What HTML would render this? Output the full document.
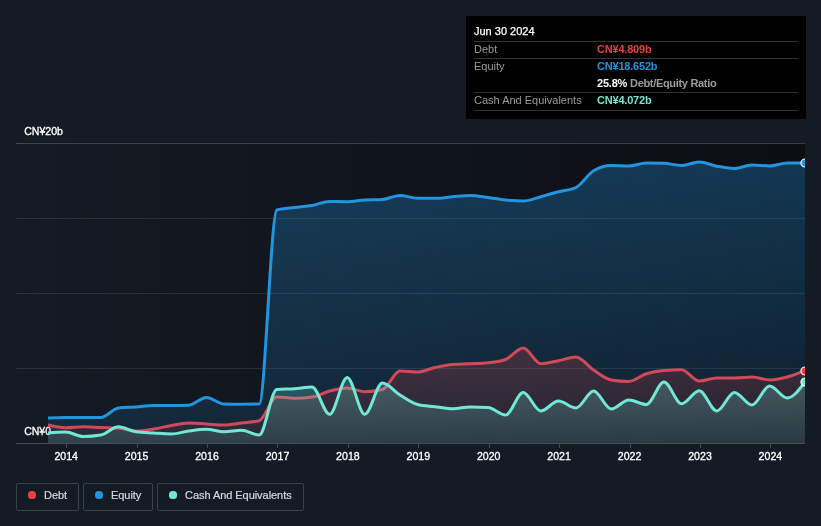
<!DOCTYPE html>
<html><head><meta charset="utf-8"><title>Debt Equity History</title>
<style>
html,body{margin:0;padding:0;background:#151b24;}
body{width:821px;height:526px;overflow:hidden;position:relative;font-family:"Liberation Sans",sans-serif;}
svg{position:absolute;left:0;top:0;will-change:transform;}
.tip,.leg{will-change:transform;}
svg text{font-family:"Liberation Sans",sans-serif;}
.tip{position:absolute;left:466px;top:16px;width:340px;height:103px;background:#000;}
.tip .row{position:absolute;left:8px;right:8px;height:17px;border-top:1px solid #333;font-size:11px;line-height:14px;color:#9b9b9b;white-space:nowrap;}
.tip .row b{position:absolute;left:123px;top:0;font-weight:bold;letter-spacing:-0.2px;}
.tip .row b span{font-weight:bold;letter-spacing:-0.32px;}
.tip .hd{position:absolute;left:8px;top:8px;font-size:11px;line-height:14px;color:#fff;-webkit-text-stroke:0.25px #fff;}
.leg{position:absolute;top:483px;height:28px;border:1px solid #3a414c;border-radius:2px;font-size:11px;line-height:24px;color:#d6d9dd;box-sizing:border-box;}
.leg i{position:absolute;left:11px;top:7px;width:8px;height:8px;border-radius:3.5px;}
.leg span{position:absolute;left:27px;top:-1px;white-space:nowrap;letter-spacing:-0.05px;-webkit-text-stroke:0.2px #d6d9dd;}
</style></head><body>
<svg width="821" height="526" viewBox="0 0 821 526">
<defs>
<linearGradient id="bgx" x1="0" x2="1" y1="0" y2="0"><stop offset="0" stop-color="#0b0d12" stop-opacity="0"/><stop offset="1" stop-color="#0b0d12" stop-opacity="0.9"/></linearGradient>
<linearGradient id="ge" x1="0" x2="0" y1="143" y2="443" gradientUnits="userSpaceOnUse"><stop offset="0" stop-color="#2394df" stop-opacity="0.32"/><stop offset="1" stop-color="#2394df" stop-opacity="0.12"/></linearGradient>
<linearGradient id="gd" x1="0" x2="0" y1="348" y2="443" gradientUnits="userSpaceOnUse"><stop offset="0" stop-color="#e64141" stop-opacity="0.23"/><stop offset="1" stop-color="#e64141" stop-opacity="0.08"/></linearGradient>
<linearGradient id="gc" x1="0" x2="0" y1="377" y2="443" gradientUnits="userSpaceOnUse"><stop offset="0" stop-color="#71e7d6" stop-opacity="0.26"/><stop offset="1" stop-color="#71e7d6" stop-opacity="0.12"/></linearGradient>
<clipPath id="cp"><rect x="16" y="130" width="789" height="313"/></clipPath>
</defs>
<rect x="16" y="143" width="789" height="300" fill="url(#bgx)"/>
<g stroke="#ffffff" stroke-opacity="0.10" stroke-width="1" shape-rendering="crispEdges">
<line x1="16" x2="805" y1="143.5" y2="143.5" stroke-opacity="0.19"/>
<line x1="16" x2="805" y1="218.5" y2="218.5"/>
<line x1="16" x2="805" y1="293.5" y2="293.5"/>
<line x1="16" x2="805" y1="368.5" y2="368.5"/>
</g>
<g font-size="11" fill="#ffffff" stroke="#ffffff" stroke-width="0.3">
<text x="24.2" y="135.0" text-anchor="start" textLength="38.8" lengthAdjust="spacingAndGlyphs">CN¥20b</text>
<text x="24.2" y="435.2" text-anchor="start" textLength="26.8" lengthAdjust="spacingAndGlyphs">CN¥0</text>
</g>
<g clip-path="url(#cp)">
<path d="M48.00,418.00C53.87,417.75,59.73,417.50,65.60,417.50C71.47,417.50,77.33,417.50,83.20,417.50C89.07,417.50,94.93,417.50,100.80,417.50C106.67,417.50,112.53,408.67,118.40,408.00C124.27,407.33,130.13,407.42,136.00,407.00C141.87,406.58,147.73,405.50,153.60,405.50C159.47,405.50,165.33,405.50,171.20,405.50C177.07,405.50,182.93,405.40,188.80,405.20C194.67,405.00,200.53,397.40,206.40,397.40C212.27,397.40,218.13,403.87,224.00,404.00C229.87,404.13,235.73,404.20,241.60,404.20C247.47,404.20,253.33,404.13,259.20,404.00C265.07,403.87,270.93,211.67,276.80,210.00C282.67,208.33,288.53,208.25,294.40,207.50C300.27,206.75,306.13,206.50,312.00,205.50C317.87,204.50,323.73,201.50,329.60,201.50C335.47,201.50,341.33,201.70,347.20,201.70C353.07,201.70,358.93,200.33,364.80,200.00C370.67,199.67,376.53,199.83,382.40,199.50C388.27,199.17,394.13,195.50,400.00,195.50C405.87,195.50,411.73,198.30,417.60,198.30C423.47,198.30,429.33,198.30,435.20,198.30C441.07,198.30,446.93,197.17,452.80,196.70C458.67,196.23,464.53,195.50,470.40,195.50C476.27,195.50,482.13,196.75,488.00,197.50C493.87,198.25,499.73,199.42,505.60,200.00C511.47,200.58,517.33,201.00,523.20,201.00C529.07,201.00,534.93,198.25,540.80,196.70C546.67,195.15,552.53,193.23,558.40,191.70C564.27,190.17,570.13,190.30,576.00,187.50C581.87,184.70,587.73,174.17,593.60,170.70C599.47,167.23,605.33,165.50,611.20,165.50C617.07,165.50,622.93,166.00,628.80,166.00C634.67,166.00,640.53,163.00,646.40,163.00C652.27,163.00,658.13,163.10,664.00,163.30C669.87,163.50,675.73,165.50,681.60,165.50C687.47,165.50,693.33,162.00,699.20,162.00C705.07,162.00,710.93,165.12,716.80,166.20C722.67,167.28,728.53,168.50,734.40,168.50C740.27,168.50,746.13,165.00,752.00,165.00C757.87,165.00,763.73,166.00,769.60,166.00C775.47,166.00,781.33,163.00,787.20,163.00C793.13,163.00,799.07,163.00,805.00,163.00L805.00,443 L48.00,443 Z" fill="url(#ge)"/>
<path d="M48.00,418.00C53.87,417.75,59.73,417.50,65.60,417.50C71.47,417.50,77.33,417.50,83.20,417.50C89.07,417.50,94.93,417.50,100.80,417.50C106.67,417.50,112.53,408.67,118.40,408.00C124.27,407.33,130.13,407.42,136.00,407.00C141.87,406.58,147.73,405.50,153.60,405.50C159.47,405.50,165.33,405.50,171.20,405.50C177.07,405.50,182.93,405.40,188.80,405.20C194.67,405.00,200.53,397.40,206.40,397.40C212.27,397.40,218.13,403.87,224.00,404.00C229.87,404.13,235.73,404.20,241.60,404.20C247.47,404.20,253.33,404.13,259.20,404.00C265.07,403.87,270.93,211.67,276.80,210.00C282.67,208.33,288.53,208.25,294.40,207.50C300.27,206.75,306.13,206.50,312.00,205.50C317.87,204.50,323.73,201.50,329.60,201.50C335.47,201.50,341.33,201.70,347.20,201.70C353.07,201.70,358.93,200.33,364.80,200.00C370.67,199.67,376.53,199.83,382.40,199.50C388.27,199.17,394.13,195.50,400.00,195.50C405.87,195.50,411.73,198.30,417.60,198.30C423.47,198.30,429.33,198.30,435.20,198.30C441.07,198.30,446.93,197.17,452.80,196.70C458.67,196.23,464.53,195.50,470.40,195.50C476.27,195.50,482.13,196.75,488.00,197.50C493.87,198.25,499.73,199.42,505.60,200.00C511.47,200.58,517.33,201.00,523.20,201.00C529.07,201.00,534.93,198.25,540.80,196.70C546.67,195.15,552.53,193.23,558.40,191.70C564.27,190.17,570.13,190.30,576.00,187.50C581.87,184.70,587.73,174.17,593.60,170.70C599.47,167.23,605.33,165.50,611.20,165.50C617.07,165.50,622.93,166.00,628.80,166.00C634.67,166.00,640.53,163.00,646.40,163.00C652.27,163.00,658.13,163.10,664.00,163.30C669.87,163.50,675.73,165.50,681.60,165.50C687.47,165.50,693.33,162.00,699.20,162.00C705.07,162.00,710.93,165.12,716.80,166.20C722.67,167.28,728.53,168.50,734.40,168.50C740.27,168.50,746.13,165.00,752.00,165.00C757.87,165.00,763.73,166.00,769.60,166.00C775.47,166.00,781.33,163.00,787.20,163.00C793.13,163.00,799.07,163.00,805.00,163.00" fill="none" stroke="#2394df" stroke-width="3" stroke-linejoin="round"/>
<path d="M48.00,425.00C53.87,426.35,59.73,427.70,65.60,427.70C71.47,427.70,77.33,426.70,83.20,426.70C89.07,426.70,94.93,427.28,100.80,427.50C106.67,427.72,112.53,427.67,118.40,428.00C124.27,428.33,130.13,431.00,136.00,431.00C141.87,431.00,147.73,429.92,153.60,429.00C159.47,428.08,165.33,426.50,171.20,425.50C177.07,424.50,182.93,423.00,188.80,423.00C194.67,423.00,200.53,423.67,206.40,424.00C212.27,424.33,218.13,425.00,224.00,425.00C229.87,425.00,235.73,423.72,241.60,423.00C247.47,422.28,253.33,422.23,259.20,420.70C265.07,419.17,270.93,397.00,276.80,397.00C282.67,397.00,288.53,398.20,294.40,398.20C300.27,398.20,306.13,397.80,312.00,397.00C317.87,396.20,323.73,392.50,329.60,391.00C335.47,389.50,341.33,388.00,347.20,388.00C353.07,388.00,358.93,391.70,364.80,391.70C370.67,391.70,376.53,390.97,382.40,389.50C388.27,388.03,394.13,371.00,400.00,371.00C405.87,371.00,411.73,372.00,417.60,372.00C423.47,372.00,429.33,368.75,435.20,367.50C441.07,366.25,446.93,364.97,452.80,364.50C458.67,364.03,464.53,364.08,470.40,363.80C476.27,363.52,482.13,363.47,488.00,362.80C493.87,362.13,499.73,361.70,505.60,359.50C511.47,357.30,517.33,348.00,523.20,348.00C529.07,348.00,534.93,363.70,540.80,363.70C546.67,363.70,552.53,361.82,558.40,360.70C564.27,359.58,570.13,357.00,576.00,357.00C581.87,357.00,587.73,366.17,593.60,370.00C599.47,373.83,605.33,379.00,611.20,380.00C617.07,381.00,622.93,381.50,628.80,381.50C634.67,381.50,640.53,375.53,646.40,373.70C652.27,371.87,658.13,371.03,664.00,370.50C669.87,369.97,675.73,369.70,681.60,369.70C687.47,369.70,693.33,381.00,699.20,381.00C705.07,381.00,710.93,378.00,716.80,378.00C722.67,378.00,728.53,378.00,734.40,378.00C740.27,378.00,746.13,377.00,752.00,377.00C757.87,377.00,763.73,380.00,769.60,380.00C775.47,380.00,781.33,378.54,787.20,377.00C793.13,375.45,799.07,373.07,805.00,370.70L805.00,443 L48.00,443 Z" fill="url(#gd)"/>
<path d="M48.00,425.00C53.87,426.35,59.73,427.70,65.60,427.70C71.47,427.70,77.33,426.70,83.20,426.70C89.07,426.70,94.93,427.28,100.80,427.50C106.67,427.72,112.53,427.67,118.40,428.00C124.27,428.33,130.13,431.00,136.00,431.00C141.87,431.00,147.73,429.92,153.60,429.00C159.47,428.08,165.33,426.50,171.20,425.50C177.07,424.50,182.93,423.00,188.80,423.00C194.67,423.00,200.53,423.67,206.40,424.00C212.27,424.33,218.13,425.00,224.00,425.00C229.87,425.00,235.73,423.72,241.60,423.00C247.47,422.28,253.33,422.23,259.20,420.70C265.07,419.17,270.93,397.00,276.80,397.00C282.67,397.00,288.53,398.20,294.40,398.20C300.27,398.20,306.13,397.80,312.00,397.00C317.87,396.20,323.73,392.50,329.60,391.00C335.47,389.50,341.33,388.00,347.20,388.00C353.07,388.00,358.93,391.70,364.80,391.70C370.67,391.70,376.53,390.97,382.40,389.50C388.27,388.03,394.13,371.00,400.00,371.00C405.87,371.00,411.73,372.00,417.60,372.00C423.47,372.00,429.33,368.75,435.20,367.50C441.07,366.25,446.93,364.97,452.80,364.50C458.67,364.03,464.53,364.08,470.40,363.80C476.27,363.52,482.13,363.47,488.00,362.80C493.87,362.13,499.73,361.70,505.60,359.50C511.47,357.30,517.33,348.00,523.20,348.00C529.07,348.00,534.93,363.70,540.80,363.70C546.67,363.70,552.53,361.82,558.40,360.70C564.27,359.58,570.13,357.00,576.00,357.00C581.87,357.00,587.73,366.17,593.60,370.00C599.47,373.83,605.33,379.00,611.20,380.00C617.07,381.00,622.93,381.50,628.80,381.50C634.67,381.50,640.53,375.53,646.40,373.70C652.27,371.87,658.13,371.03,664.00,370.50C669.87,369.97,675.73,369.70,681.60,369.70C687.47,369.70,693.33,381.00,699.20,381.00C705.07,381.00,710.93,378.00,716.80,378.00C722.67,378.00,728.53,378.00,734.40,378.00C740.27,378.00,746.13,377.00,752.00,377.00C757.87,377.00,763.73,380.00,769.60,380.00C775.47,380.00,781.33,378.54,787.20,377.00C793.13,375.45,799.07,373.07,805.00,370.70" fill="none" stroke="#d04a5a" stroke-width="3" stroke-linejoin="round"/>
<path d="M48.00,433.00C53.87,432.50,59.73,432.00,65.60,432.00C71.47,432.00,77.33,436.50,83.20,436.50C89.07,436.50,94.93,436.00,100.80,435.00C106.67,434.00,112.53,426.70,118.40,426.70C124.27,426.70,130.13,430.83,136.00,431.70C141.87,432.57,147.73,432.62,153.60,433.00C159.47,433.38,165.33,434.00,171.20,434.00C177.07,434.00,182.93,431.78,188.80,431.00C194.67,430.22,200.53,429.30,206.40,429.30C212.27,429.30,218.13,431.70,224.00,431.70C229.87,431.70,235.73,430.30,241.60,430.30C247.47,430.30,253.33,435.00,259.20,435.00C265.07,435.00,270.93,390.03,276.80,389.50C282.67,388.97,288.53,389.12,294.40,388.70C300.27,388.28,306.13,387.00,312.00,387.00C317.87,387.00,323.73,414.30,329.60,414.30C335.47,414.30,341.33,377.50,347.20,377.50C353.07,377.50,358.93,414.30,364.80,414.30C370.67,414.30,376.53,383.00,382.40,383.00C388.27,383.00,394.13,391.42,400.00,395.00C405.87,398.58,411.73,403.03,417.60,404.50C423.47,405.97,429.33,406.00,435.20,406.70C441.07,407.40,446.93,408.70,452.80,408.70C458.67,408.70,464.53,407.00,470.40,407.00C476.27,407.00,482.13,407.17,488.00,407.50C493.87,407.83,499.73,415.00,505.60,415.00C511.47,415.00,517.33,392.50,523.20,392.50C529.07,392.50,534.93,411.00,540.80,411.00C546.67,411.00,552.53,401.00,558.40,401.00C564.27,401.00,570.13,408.00,576.00,408.00C581.87,408.00,587.73,391.00,593.60,391.00C599.47,391.00,605.33,409.00,611.20,409.00C617.07,409.00,622.93,400.00,628.80,400.00C634.67,400.00,640.53,404.50,646.40,404.50C652.27,404.50,658.13,382.00,664.00,382.00C669.87,382.00,675.73,403.70,681.60,403.70C687.47,403.70,693.33,390.70,699.20,390.70C705.07,390.70,710.93,411.00,716.80,411.00C722.67,411.00,728.53,392.50,734.40,392.50C740.27,392.50,746.13,405.00,752.00,405.00C757.87,405.00,763.73,386.00,769.60,386.00C775.47,386.00,781.33,398.00,787.20,398.00C793.13,398.00,799.07,390.00,805.00,382.00L805.00,443 L48.00,443 Z" fill="url(#gc)"/>
<path d="M48.00,433.00C53.87,432.50,59.73,432.00,65.60,432.00C71.47,432.00,77.33,436.50,83.20,436.50C89.07,436.50,94.93,436.00,100.80,435.00C106.67,434.00,112.53,426.70,118.40,426.70C124.27,426.70,130.13,430.83,136.00,431.70C141.87,432.57,147.73,432.62,153.60,433.00C159.47,433.38,165.33,434.00,171.20,434.00C177.07,434.00,182.93,431.78,188.80,431.00C194.67,430.22,200.53,429.30,206.40,429.30C212.27,429.30,218.13,431.70,224.00,431.70C229.87,431.70,235.73,430.30,241.60,430.30C247.47,430.30,253.33,435.00,259.20,435.00C265.07,435.00,270.93,390.03,276.80,389.50C282.67,388.97,288.53,389.12,294.40,388.70C300.27,388.28,306.13,387.00,312.00,387.00C317.87,387.00,323.73,414.30,329.60,414.30C335.47,414.30,341.33,377.50,347.20,377.50C353.07,377.50,358.93,414.30,364.80,414.30C370.67,414.30,376.53,383.00,382.40,383.00C388.27,383.00,394.13,391.42,400.00,395.00C405.87,398.58,411.73,403.03,417.60,404.50C423.47,405.97,429.33,406.00,435.20,406.70C441.07,407.40,446.93,408.70,452.80,408.70C458.67,408.70,464.53,407.00,470.40,407.00C476.27,407.00,482.13,407.17,488.00,407.50C493.87,407.83,499.73,415.00,505.60,415.00C511.47,415.00,517.33,392.50,523.20,392.50C529.07,392.50,534.93,411.00,540.80,411.00C546.67,411.00,552.53,401.00,558.40,401.00C564.27,401.00,570.13,408.00,576.00,408.00C581.87,408.00,587.73,391.00,593.60,391.00C599.47,391.00,605.33,409.00,611.20,409.00C617.07,409.00,622.93,400.00,628.80,400.00C634.67,400.00,640.53,404.50,646.40,404.50C652.27,404.50,658.13,382.00,664.00,382.00C669.87,382.00,675.73,403.70,681.60,403.70C687.47,403.70,693.33,390.70,699.20,390.70C705.07,390.70,710.93,411.00,716.80,411.00C722.67,411.00,728.53,392.50,734.40,392.50C740.27,392.50,746.13,405.00,752.00,405.00C757.87,405.00,763.73,386.00,769.60,386.00C775.47,386.00,781.33,398.00,787.20,398.00C793.13,398.00,799.07,390.00,805.00,382.00" fill="none" stroke="#71e7d6" stroke-width="3" stroke-linejoin="round"/>
<circle cx="805" cy="163" r="4" fill="#2394df" stroke="#fff" stroke-width="1.2"/>
<circle cx="805" cy="371" r="4" fill="#e64141" stroke="#fff" stroke-width="1.2"/>
<circle cx="805" cy="382" r="4" fill="#71e7d6" stroke="#fff" stroke-width="1.2"/>
</g>
<line x1="16" x2="805" y1="443.5" y2="443.5" stroke="#464c57" stroke-width="1" shape-rendering="crispEdges"/>
<g shape-rendering="crispEdges"><line x1="66.5" x2="66.5" y1="444" y2="448" stroke="#464c57" stroke-width="1"/><line x1="137.5" x2="137.5" y1="444" y2="448" stroke="#464c57" stroke-width="1"/><line x1="207.5" x2="207.5" y1="444" y2="448" stroke="#464c57" stroke-width="1"/><line x1="277.5" x2="277.5" y1="444" y2="448" stroke="#464c57" stroke-width="1"/><line x1="348.5" x2="348.5" y1="444" y2="448" stroke="#464c57" stroke-width="1"/><line x1="418.5" x2="418.5" y1="444" y2="448" stroke="#464c57" stroke-width="1"/><line x1="489.5" x2="489.5" y1="444" y2="448" stroke="#464c57" stroke-width="1"/><line x1="559.5" x2="559.5" y1="444" y2="448" stroke="#464c57" stroke-width="1"/><line x1="630.5" x2="630.5" y1="444" y2="448" stroke="#464c57" stroke-width="1"/><line x1="700.5" x2="700.5" y1="444" y2="448" stroke="#464c57" stroke-width="1"/><line x1="770.5" x2="770.5" y1="444" y2="448" stroke="#464c57" stroke-width="1"/></g>
<g font-size="11" fill="#ffffff" stroke="#ffffff" stroke-width="0.3">
<text x="66.2" y="460.0" text-anchor="middle" textLength="23.6" lengthAdjust="spacingAndGlyphs">2014</text><text x="136.6" y="460.0" text-anchor="middle" textLength="23.6" lengthAdjust="spacingAndGlyphs">2015</text><text x="207.0" y="460.0" text-anchor="middle" textLength="23.6" lengthAdjust="spacingAndGlyphs">2016</text><text x="277.5" y="460.0" text-anchor="middle" textLength="23.6" lengthAdjust="spacingAndGlyphs">2017</text><text x="347.9" y="460.0" text-anchor="middle" textLength="23.6" lengthAdjust="spacingAndGlyphs">2018</text><text x="418.3" y="460.0" text-anchor="middle" textLength="23.6" lengthAdjust="spacingAndGlyphs">2019</text><text x="488.7" y="460.0" text-anchor="middle" textLength="23.6" lengthAdjust="spacingAndGlyphs">2020</text><text x="559.1" y="460.0" text-anchor="middle" textLength="23.6" lengthAdjust="spacingAndGlyphs">2021</text><text x="629.6" y="460.0" text-anchor="middle" textLength="23.6" lengthAdjust="spacingAndGlyphs">2022</text><text x="700.0" y="460.0" text-anchor="middle" textLength="23.6" lengthAdjust="spacingAndGlyphs">2023</text><text x="770.4" y="460.0" text-anchor="middle" textLength="23.6" lengthAdjust="spacingAndGlyphs">2024</text>
</g>
</svg>
<div class="tip">
<div class="hd">Jun 30 2024</div>
<div class="row" style="top:25px">Debt<b style="color:#e64141">CN¥4.809b</b></div>
<div class="row" style="top:42px">Equity<b style="color:#2394df">CN¥18.652b</b></div>
<div class="row" style="top:59px;border-top:none;line-height:16px"><b style="color:#fff">25.8% <span style="color:#9b9b9b">Debt/Equity Ratio</span></b></div>
<div class="row" style="top:76px">Cash And Equivalents<b style="color:#71e7d6">CN¥4.072b</b></div>
<div class="row" style="top:94px;height:0"></div>
</div>
<div class="leg" style="left:16px;width:63px"><i style="background:#e64141"></i><span>Debt</span></div>
<div class="leg" style="left:83px;width:70px"><i style="background:#2394df"></i><span>Equity</span></div>
<div class="leg" style="left:157px;width:147px"><i style="background:#71e7d6"></i><span>Cash And Equivalents</span></div>
</body></html>
